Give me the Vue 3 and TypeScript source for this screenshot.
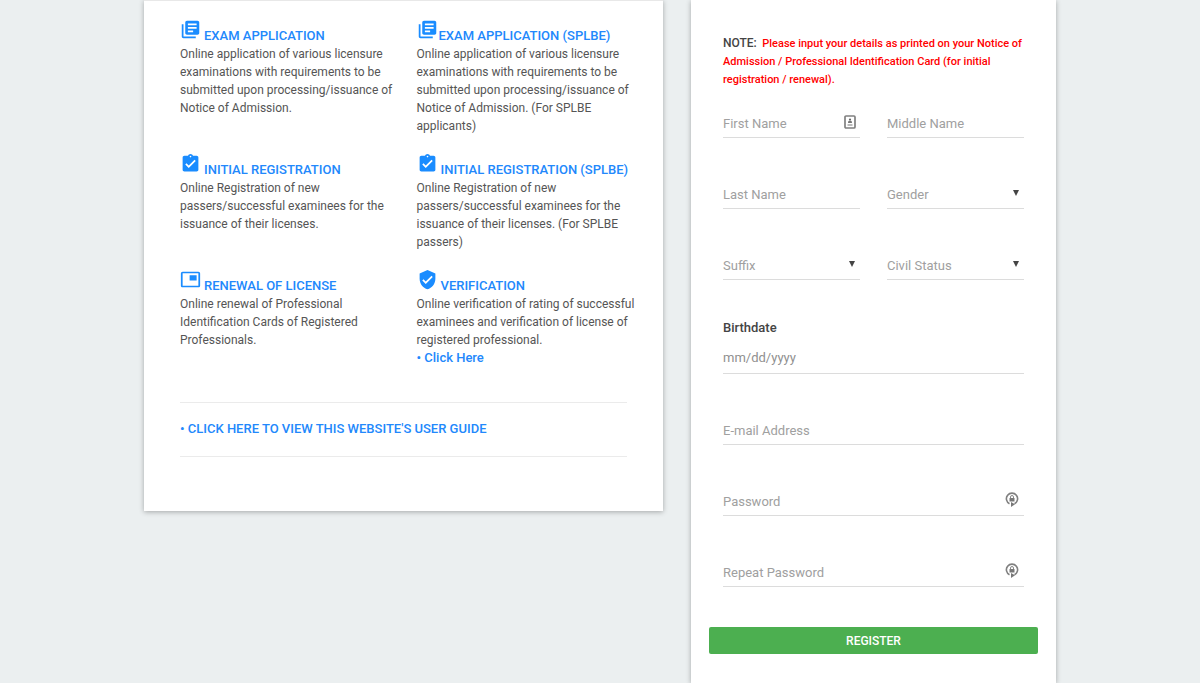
<script setup lang="ts">
import { ref } from 'vue'

interface Service {
  title: string
  icon: string
  text: string
  tight?: boolean
  link?: string
}

const icons: Record<string, string> = {
  books:
    'M4 6H2v14c0 1.1.9 2 2 2h14v-2H4V6zm16-4H8c-1.1 0-2 .9-2 2v12c0 1.1.9 2 2 2h12c1.1 0 2-.9 2-2V4c0-1.1-.9-2-2-2zm-1 9H9V9h10v2zm-4 4H9v-2h6v2zm4-8H9V5h10v2z',
  assignment:
    'M19 3h-4.18C14.4 1.84 13.3 1 12 1c-1.3 0-2.4.84-2.82 2H5c-1.1 0-2 .9-2 2v14c0 1.1.9 2 2 2h14c1.1 0 2-.9 2-2V5c0-1.1-.9-2-2-2zm-7 0c.55 0 1 .45 1 1s-.45 1-1 1-1-.45-1-1 .45-1 1-1zm-2 14l-4-4 1.41-1.41L10 14.17l6.59-6.59L18 9l-8 8z',
  card: 'M19 7h-8v6h8V7zm2-4H3c-1.1 0-2 .9-2 2v14c0 1.1.9 1.98 2 1.98h18c1.1 0 2-.88 2-1.98V5c0-1.1-.9-2-2-2zm0 16.01H3V4.98h18v14.03z',
  shield:
    'M12 1L3 5v6c0 5.55 3.84 10.74 9 12 5.16-1.26 9-6.45 9-12V5l-9-4zm-2 16l-4-4 1.41-1.41L10 14.17l6.59-6.59L18 9l-8 8z',
}

const services: Service[] = [
  {
    title: 'EXAM APPLICATION',
    icon: 'books',
    text: 'Online application of various licensure examinations with requirements to be submitted upon processing/issuance of Notice of Admission.',
  },
  {
    title: 'EXAM APPLICATION (SPLBE)',
    icon: 'books',
    tight: true,
    text: 'Online application of various licensure examinations with requirements to be submitted upon processing/issuance of Notice of Admission. (For SPLBE applicants)',
  },
  {
    title: 'INITIAL REGISTRATION',
    icon: 'assignment',
    text: 'Online Registration of new passers/successful examinees for the issuance of their licenses.',
  },
  {
    title: 'INITIAL REGISTRATION (SPLBE)',
    icon: 'assignment',
    text: 'Online Registration of new passers/successful examinees for the issuance of their licenses. (For SPLBE passers)',
  },
  {
    title: 'RENEWAL OF LICENSE',
    icon: 'card',
    text: 'Online renewal of Professional Identification Cards of Registered Professionals.',
  },
  {
    title: 'VERIFICATION',
    icon: 'shield',
    text: 'Online verification of rating of successful examinees and verification of license of registered professional.',
    link: 'Click Here',
  },
]

const form = ref({
  firstName: '',
  middleName: '',
  lastName: '',
  gender: '',
  suffix: '',
  civilStatus: '',
  birthdate: '',
  email: '',
  password: '',
  repeat: '',
})
</script>

<template>
  <main class="page">
    <section class="card services">
      <div class="grid">
        <article v-for="s in services" :key="s.title">
          <h2 :class="{ tight: s.tight }">
            <svg viewBox="0 0 24 24" aria-hidden="true"><path :d="icons[s.icon]" /></svg>
            <a href="#">{{ s.title }}</a>
          </h2>
          <p>{{ s.text }}</p>
          <a v-if="s.link" class="more" href="#">• {{ s.link }}</a>
        </article>
      </div>
      <div class="guide">
        <a href="#">• CLICK HERE TO VIEW THIS WEBSITE'S USER GUIDE</a>
      </div>
    </section>

    <form class="card register" @submit.prevent>
      <div class="fields">
        <p class="note">
          <strong>NOTE:</strong>&nbsp; Please input your details as printed on your Notice of
          Admission / Professional Identification Card (for initial registration / renewal).
        </p>
        <div class="pair">
          <div class="field">
            <input v-model="form.firstName" type="text" placeholder="First Name" aria-label="First Name" />
            <svg class="badge" viewBox="0 0 14 16" aria-hidden="true">
              <rect x="2" y="2" width="10" height="12" rx="1" fill="none" stroke="#808080" stroke-width="1.700" />
              <circle cx="7" cy="5.500" r="1.100" fill="#666" />
              <path d="M5 9c0-1.600.8-2.400 2-2.400S9 7.400 9 9zM4.500 10.500h5v1h-5z" fill="#777" />
            </svg>
          </div>
          <div class="field">
            <input v-model="form.middleName" type="text" placeholder="Middle Name" aria-label="Middle Name" />
          </div>
        </div>
        <div class="pair">
          <div class="field">
            <input v-model="form.lastName" type="text" placeholder="Last Name" aria-label="Last Name" />
          </div>
          <div class="field">
            <select v-model="form.gender" aria-label="Gender">
              <option value="">Gender</option>
              <option>Male</option>
              <option>Female</option>
            </select>
            <svg class="arrow" viewBox="0 0 6 6" aria-hidden="true"><path d="M0 0h6L3 6z" /></svg>
          </div>
        </div>
        <div class="pair">
          <div class="field">
            <select v-model="form.suffix" aria-label="Suffix">
              <option value="">Suffix</option>
              <option>Jr.</option>
              <option>Sr.</option>
            </select>
            <svg class="arrow" viewBox="0 0 6 6" aria-hidden="true"><path d="M0 0h6L3 6z" /></svg>
          </div>
          <div class="field">
            <select v-model="form.civilStatus" aria-label="Civil Status">
              <option value="">Civil Status</option>
              <option>Single</option>
              <option>Married</option>
            </select>
            <svg class="arrow" viewBox="0 0 6 6" aria-hidden="true"><path d="M0 0h6L3 6z" /></svg>
          </div>
        </div>
        <div class="birth">
          <label for="birthdate">Birthdate</label>
          <input id="birthdate" v-model="form.birthdate" type="date" />
        </div>
        <div class="field">
          <input v-model="form.email" type="email" placeholder="E-mail Address" aria-label="E-mail Address" />
        </div>
        <div class="field">
          <input v-model="form.password" type="password" placeholder="Password" aria-label="Password" />
          <svg class="lock" viewBox="0 0 16 16" aria-hidden="true">
            <path d="M5.500 12.700A5.600 5.600 0 1 1 10.500 12.700" fill="none" stroke="#808080" stroke-width="1.600" />
            <path d="M7 11l4 2.200L7 16z" fill="#777" />
            <path d="M5.500 7h5v3.500h-5z" fill="#777" />
            <path d="M6.500 7.200V6a1.500 1.500 0 0 1 3 0v1.200" fill="none" stroke="#888" />
          </svg>
        </div>
        <div class="field">
          <input v-model="form.repeat" type="password" placeholder="Repeat Password" aria-label="Repeat Password" />
          <svg class="lock" viewBox="0 0 16 16" aria-hidden="true">
            <path d="M5.500 12.700A5.600 5.600 0 1 1 10.500 12.700" fill="none" stroke="#808080" stroke-width="1.600" />
            <path d="M7 11l4 2.200L7 16z" fill="#777" />
            <path d="M5.500 7h5v3.500h-5z" fill="#777" />
            <path d="M6.500 7.200V6a1.500 1.500 0 0 1 3 0v1.200" fill="none" stroke="#888" />
          </svg>
        </div>
      </div>
      <button type="submit">REGISTER</button>
    </form>
  </main>
</template>

<style>
body {
  margin: 0;
  background: #ebeff0;
}
</style>

<style scoped>
.page {
  box-sizing: border-box;
  display: grid;
  grid-template-columns: 519fr 365fr;
  gap: 28px;
  align-items: start;
  width: 76%;
  min-height: 100vh;
  margin: 0 auto;
  font-family: Roboto, "Liberation Sans", sans-serif;
  font-size: 12px;
  line-height: 18px;
  color: #555;
}

.card {
  box-sizing: border-box;
  background: #fff;
  box-shadow: 0 1px 5px rgba(0, 0, 0, 0.3);
}

a {
  color: #2288fc;
  text-decoration: none;
}

.services {
  border-top: 1px solid #e8e8e8;
  padding: 18px 36px 54px;
}

.grid {
  display: grid;
  grid-template-columns: repeat(2, minmax(0, 1fr));
  gap: 18px 26px;
}

h2 {
  display: flex;
  align-items: flex-end;
  gap: 3px;
  height: 26px;
  margin: 0;
  font-size: 13px;
  line-height: 18px;
  font-weight: 500;
  white-space: nowrap;
}

h2.tight {
  gap: 1px;
}

h2 svg {
  align-self: flex-start;
  flex: none;
  width: 21px;
  height: 21px;
  fill: #1a8cff;
}

p {
  margin: 0;
}

article p {
  margin-right: -10px;
}

.more,
.guide a {
  font-size: 13px;
  font-weight: 500;
}

.more {
  display: block;
}

.guide {
  margin-top: 35px;
  padding: 17px 0 18px;
  border-top: 1px solid #ebebeb;
  border-bottom: 1px solid #ebebeb;
}

.register {
  align-self: stretch;
  padding: 35px 18px 29px;
}

.fields {
  display: flex;
  flex-direction: column;
  gap: 43px;
  padding: 0 14px;
}

.note {
  margin-bottom: -22px;
  font-size: 11px;
  font-weight: 500;
  color: #f00;
}

.note strong {
  font-size: 12px;
  line-height: 12px;
  font-weight: 500;
  color: #444;
}

.pair {
  display: grid;
  grid-template-columns: 1fr 1fr;
  gap: 27px;
}

.field {
  position: relative;
}

input,
select {
  box-sizing: border-box;
  display: block;
  width: 100%;
  height: 28px;
  margin: 0;
  padding: 0;
  border: 0;
  border-bottom: 1px solid #dcdcdc;
  border-radius: 0;
  outline: 0;
  background: transparent;
  font: inherit;
  font-size: 13px;
  color: #a0a0a0;
  appearance: none;
}

input::placeholder {
  color: #a0a0a0;
  opacity: 1;
}

.arrow {
  position: absolute;
  top: 9px;
  right: 5px;
  width: 6px;
  height: 6px;
  fill: #444;
}

.badge {
  position: absolute;
  top: 4px;
  right: 3px;
  width: 14px;
  height: 16px;
}

.lock {
  position: absolute;
  top: 3px;
  right: 4px;
  width: 16px;
  height: 16px;
}

.birth {
  margin-top: -4px;
}

.birth label {
  display: block;
  margin-bottom: 5px;
  font-size: 13px;
  font-weight: 500;
  color: #444;
}

.birth input {
  height: 32px;
  color: #909090;
}

.birth input::-webkit-calendar-picker-indicator {
  display: none;
}

.birth input::-webkit-datetime-edit,
.birth input::-webkit-datetime-edit-month-field,
.birth input::-webkit-datetime-edit-day-field,
.birth input::-webkit-datetime-edit-year-field {
  padding: 0;
}

button {
  display: block;
  width: 100%;
  height: 27px;
  margin-top: 40px;
  padding: 0;
  border: 0;
  border-radius: 2px;
  background: #4caf50;
  font: inherit;
  font-weight: 500;
  color: #fff;
  cursor: pointer;
}
</style>
